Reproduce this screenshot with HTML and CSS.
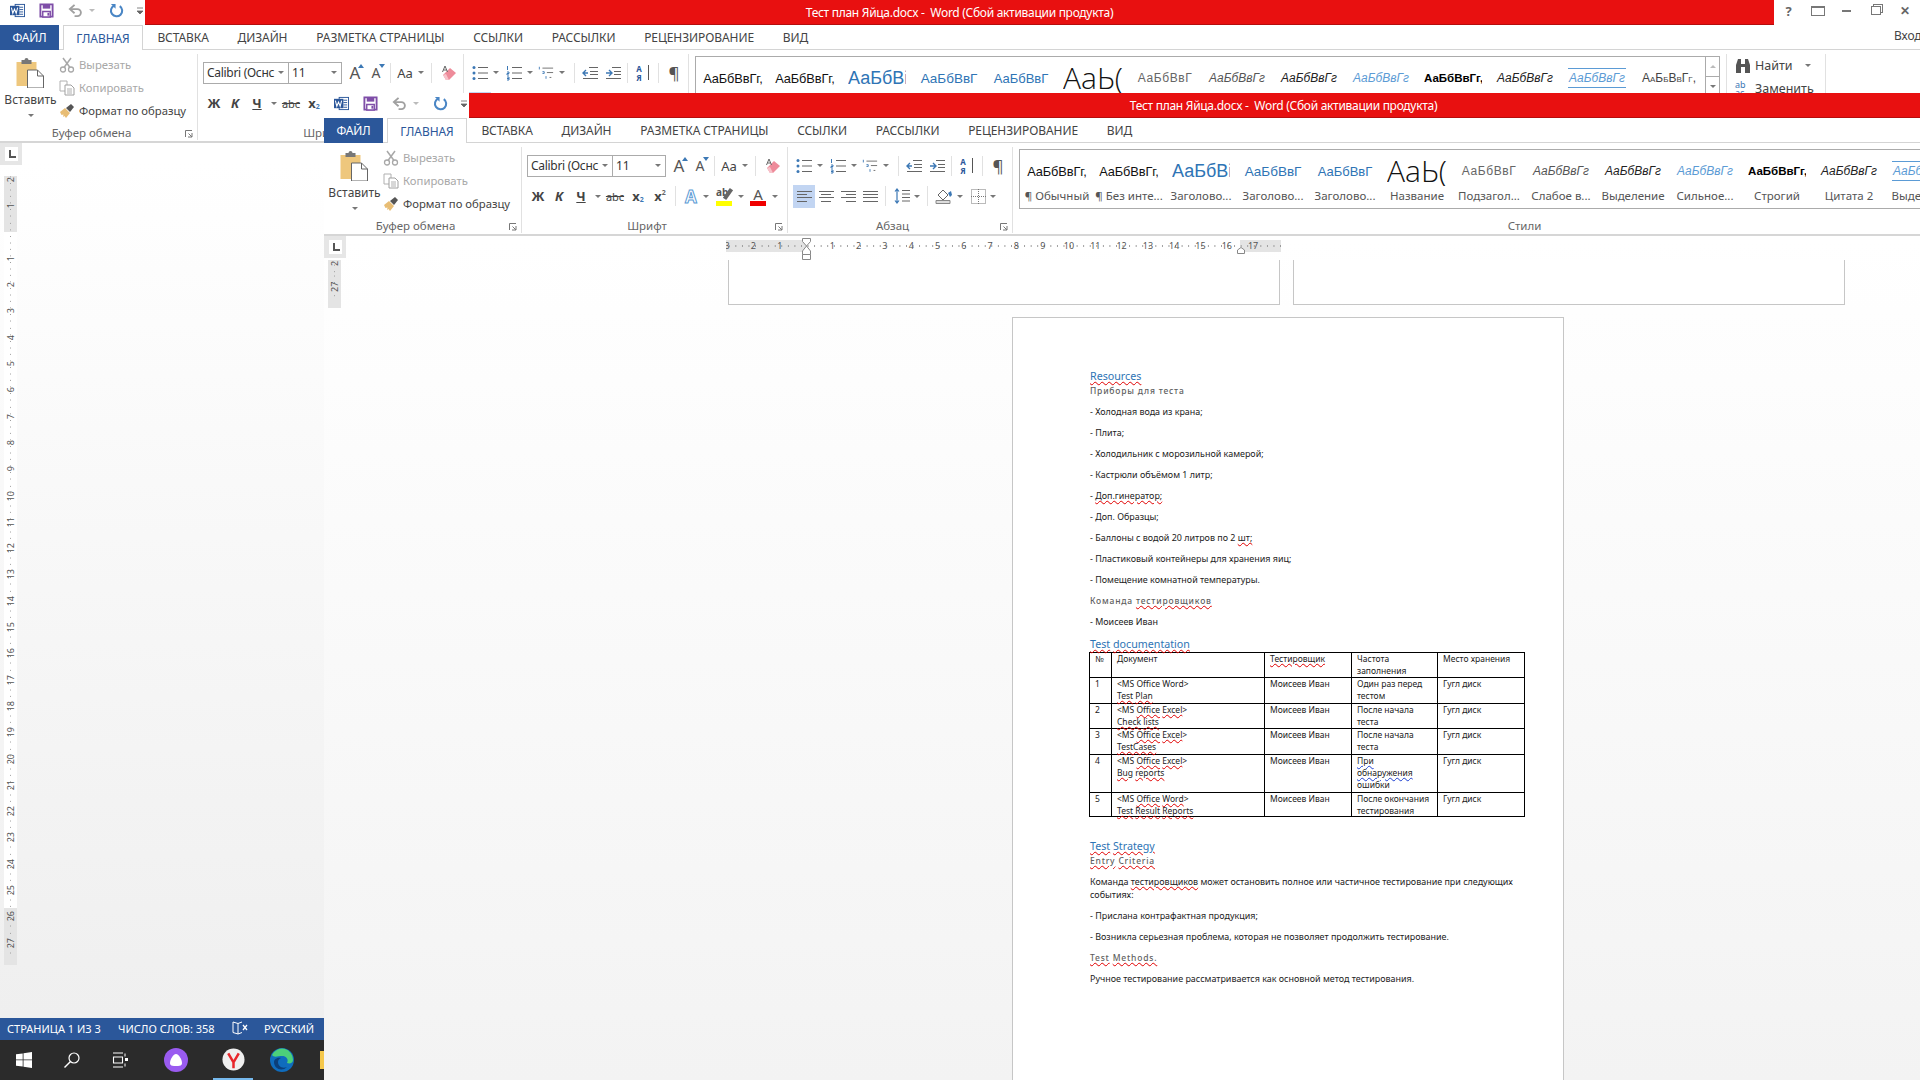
FILE: index.html
```html
<!DOCTYPE html>
<html lang="ru">
<head>
    <meta charset="UTF-8">
    <title>Тест план Яйца.docx - Word</title>
    <link rel="stylesheet" href="styles.css">
</head>
<body>
<svg class="sprites" aria-hidden="true">
    <symbol id="i-word" viewBox="0 0 16 16"><rect x="5.5" y="1.5" width="10" height="13" fill="#fff" stroke="#2b579a"/><path d="M10 4.500h4M10 7h4M10 9.500h4M10 12h4" stroke="#2b579a"/><rect x="0" y="3" width="10" height="10" fill="#2b579a"/><path d="M1.500 5l1.500 6 1.800-4.500 1.800 4.500 1.500-6" fill="none" stroke="#fff" stroke-width="1.100"/></symbol>
    <symbol id="i-save" viewBox="0 0 16 16"><path d="M1.500 1.500h13v13h-13z" fill="#fff" stroke="#7f4ea8" stroke-width="2"/><path d="M4 2h8v4H4z" fill="#7f4ea8"/><path d="M4 9h8v6H4z" fill="#fff" stroke="#7f4ea8" stroke-width="1.500"/><path d="M9 10.500h2v3H9z" fill="#7f4ea8"/></symbol>
    <symbol id="i-undo" viewBox="0 0 16 16"><path d="M3 6.500h7a3.700 3.700 0 0 1 0 7.500H7" fill="none" stroke="#a0a0a0" stroke-width="2"/><path d="M7 2L2 6.500 7 11" fill="none" stroke="#a0a0a0" stroke-width="2"/></symbol>
    <symbol id="i-redo" viewBox="0 0 16 16"><path d="M5.500 2.800a6 6 0 1 0 6 .5" fill="none" stroke="#4a86c5" stroke-width="2.200"/><path d="M2 1h5v5" fill="#4a86c5"/></symbol>
    <symbol id="i-more" viewBox="0 0 8 8"><path d="M1 1h6M1 4h6L4 7z" fill="#666" stroke="#666" stroke-width=".8"/></symbol>
    <symbol id="i-paste" viewBox="0 0 28 30"><path d="M0 4h20v24H0z" fill="#eec77d"/><path d="M5 2h3a2 2 0 0 1 4 0h3v4H5z" fill="#777"/><path d="M11 12h10l6 6v12H11z" fill="#fff" stroke="#666"/><path d="M21 12v6h6" fill="none" stroke="#666"/></symbol>
    <symbol id="i-cut" viewBox="0 0 16 16"><circle cx="4" cy="12.500" r="2.500" fill="none" stroke="#a8a8a8" stroke-width="1.300"/><circle cx="12" cy="12.500" r="2.500" fill="none" stroke="#a8a8a8" stroke-width="1.300"/><path d="M5 10.500L12 1M11 10.500L4 1" stroke="#a8a8a8" stroke-width="1.500"/></symbol>
    <symbol id="i-copy" viewBox="0 0 16 16"><path d="M1 1h7v10H1z" fill="#fff" stroke="#b0b0b0"/><path d="M6 5h6l3 3v7H6z" fill="#fff" stroke="#a0a0a0"/><path d="M8 9h5M8 11h5M8 13h5" stroke="#b0b0b0"/></symbol>
    <symbol id="i-brush" viewBox="0 0 16 16"><path d="M1 9l5-4 5 5-4 5-1.500-2L4 14l.5-2.500L2.500 12z" fill="#e8bd74"/><path d="M7 5l5-4 3 3-4 5z" fill="#555"/></symbol>
    <symbol id="i-eraser" viewBox="0 0 16 16"><path d="M2 10l7-7 6 5-7 7H5z" fill="#ee8b9a"/><path d="M2 10l3 5h3l-3-6z" fill="#f7c3cb"/><path d="M1.500 7L4 1l2.500 6M2.500 5h3" fill="none" stroke="#666"/></symbol>
    <symbol id="i-bullets" viewBox="0 0 16 16"><circle cx="2" cy="2.500" r="1.500" fill="#3c78b5"/><circle cx="2" cy="8" r="1.500" fill="#3c78b5"/><circle cx="2" cy="13.500" r="1.500" fill="#3c78b5"/><path d="M6 2.500h10M6 8h10M6 13.500h10" stroke="#666"/></symbol>
    <symbol id="i-numbers" viewBox="0 0 16 16"><path d="M1.500 1v4M1 7h2v1.500H1V10h2M1 12h2v3H1M1 13.500h2" fill="none" stroke="#3c78b5"/><path d="M6 2.500h10M6 8h10M6 13.500h10" stroke="#666"/></symbol>
    <symbol id="i-multi" viewBox="0 0 18 16"><path d="M1.500 1v3M5 6.500h2v2H5M9 11.500v3" fill="none" stroke="#3c78b5"/><path d="M5 2.500h12M10 7.500h7M13 13h2" stroke="#666"/></symbol>
    <symbol id="i-outdent" viewBox="0 0 16 16"><path d="M7 2.500h9M8 6.500h8M8 9.500h8M1 13.500h15" stroke="#666"/><path d="M6 8H1M4 5L1 8l3 3" fill="none" stroke="#3c78b5" stroke-width="1.400"/></symbol>
    <symbol id="i-indent" viewBox="0 0 16 16"><path d="M7 2.500h9M9 6.500h7M9 9.500h7M1 13.500h15" stroke="#666"/><path d="M1 8h6M4 5l3 3-3 3" fill="none" stroke="#3c78b5" stroke-width="1.400"/></symbol>
    <symbol id="i-spacing" viewBox="0 0 16 16"><path d="M3 1v14M1 3.500L3 1l2 2.500M1 12.500L3 15l2-2.500" fill="none" stroke="#3c78b5" stroke-width="1.200"/><path d="M8 2.500h8M8 6h8M8 9.500h8M8 13h8" stroke="#666"/></symbol>
    <symbol id="i-shade" viewBox="0 0 18 16"><path d="M3 7l5-5 5 5-5 5z" fill="#fff" stroke="#666"/><path d="M13 5l3-2 1 4-2 2z" fill="#3c78b5"/><path d="M1 12.500h14v3H1z" fill="#ddd" stroke="#888"/></symbol>
    <symbol id="i-borders" viewBox="0 0 15 15"><path d="M.500.500h14v14H.500z" fill="none" stroke="#777" stroke-dasharray="1 1"/><path d="M7.500 0v15M0 7.500h15" stroke="#777" stroke-dasharray="1 1"/></symbol>
    <symbol id="i-launch" viewBox="0 0 8 8"><path d="M.500 7V.500H7M7 3v4H3M3.500 3.500L7 7" fill="none" stroke="#777"/></symbol>
    <symbol id="i-find" viewBox="0 0 16 16"><path d="M1 7l2-6h3v5h4V1h3l2 6v8h-5V9H6v6H1z" fill="#555"/></symbol>
    <symbol id="i-book" viewBox="0 0 16 14"><path d="M1 1l5 1.500V13L1 11.500zM6 2.500l4-1.500M6 13l4-1.500" fill="none" stroke="#fff"/><path d="M11 4l4 5M15 4l-4 5" stroke="#fff" stroke-width="1.300"/></symbol>
    <symbol id="i-win" viewBox="0 0 16 16"><path d="M0 2.300L6.700 1.400V7.500H0zM7.500 1.300L16 0V7.500H7.500zM0 8.300H6.700V14.600L0 13.700zM7.500 8.300H16V16L7.500 14.800z" fill="#fff"/></symbol>
    <symbol id="i-search" viewBox="0 0 16 16"><circle cx="10" cy="6" r="5" fill="none" stroke="#fff" stroke-width="1.200"/><path d="M6.500 9.500L.5 15.500" stroke="#fff" stroke-width="1.400"/></symbol>
    <symbol id="i-tasks" viewBox="0 0 16 16"><path d="M1.500 5h9v6h-9zM1 1h10M1 15h10" fill="none" stroke="#fff" stroke-width="1.100"/><path d="M13 1.500v3M13 11.500v3" fill="none" stroke="#fff"/><path d="M13 6h3v3h-3z" fill="#fff"/></symbol>
    <symbol id="i-alice" viewBox="0 0 24 24"><circle cx="12" cy="12" r="12" fill="#9a5bf0"/><path d="M12 6c3 0 6 6 6 9 0 3-3 3-6 3s-6 0-6-3c0-3 3-9 6-9z" fill="#fff"/></symbol>
    <symbol id="i-yandex" viewBox="0 0 24 24"><circle cx="12" cy="12" r="11.500" fill="#efefef"/><path d="M6.500 5.500l5.500 9.500 5.500-9.500M12 14.500V21" fill="none" stroke="#e8262b" stroke-width="2.600"/></symbol>
    <symbol id="i-edge" viewBox="0 0 24 24"><circle cx="12" cy="12" r="12" fill="#0f6cbd"/><path d="M2 7a11 11 0 0 1 21 5c0 3-3 4-6 3 2-4-1-7-5-7-4 0-8 2-10-1z" fill="#4ccf7a"/><path d="M8 14c0 4 4 7 9 5-5 5-13 2-13-5 0-3 4-5 7-4-2 1-3 2-3 4z" fill="#0b3f7a"/></symbol>
</svg>

<div class="desktop">
    <!-- окно сзади -->
    <section class="window window-back">
        <header class="titlebar">
            <div class="qat">
                <svg class="qat-icon"><use href="#i-word"/></svg>
                <svg class="qat-icon"><use href="#i-save"/></svg>
                <svg class="qat-icon"><use href="#i-undo"/></svg>
                <span class="caret caret-light"></span>
                <svg class="qat-icon"><use href="#i-redo"/></svg>
                <svg class="qat-more"><use href="#i-more"/></svg>
            </div>
            <div class="title-red">Тест план Яйца.docx -&nbsp; Word (Сбой активации продукта)</div>
            <div class="winctl">
                <span class="ctl ctl-help">?</span>
                <span class="ctl"><span class="ctl-display"></span></span>
                <span class="ctl"><span class="ctl-min"></span></span>
                <span class="ctl"><span class="ctl-restore"></span></span>
                <span class="ctl ctl-close">✕</span>
            </div>
        </header>
        <nav class="tabs">
            <span class="tab-file">ФАЙЛ</span>
            <span class="tab tab-active">ГЛАВНАЯ</span>
            <span class="tab">ВСТАВКА</span>
            <span class="tab">ДИЗАЙН</span>
            <span class="tab">РАЗМЕТКА СТРАНИЦЫ</span>
            <span class="tab">ССЫЛКИ</span>
            <span class="tab">РАССЫЛКИ</span>
            <span class="tab">РЕЦЕНЗИРОВАНИЕ</span>
            <span class="tab">ВИД</span>
            <span class="signin">Вход</span>
        </nav>
        <div class="ribbon">
            <div class="group group-clip">
                <div class="group-body clip-body">
                    <div class="paste">
                        <svg class="paste-icon"><use href="#i-paste"/></svg>
                        <span>Вставить</span>
                        <span class="caret"></span>
                    </div>
                    <div class="clip-list">
                        <div class="clip-item off"><svg class="ico16"><use href="#i-cut"/></svg>Вырезать</div>
                        <div class="clip-item off"><svg class="ico16"><use href="#i-copy"/></svg>Копировать</div>
                        <div class="clip-item"><svg class="ico16"><use href="#i-brush"/></svg>Формат по образцу</div>
                    </div>
                </div>
                <div class="group-name">Буфер обмена<svg class="launch"><use href="#i-launch"/></svg></div>
            </div>
            <div class="group group-font">
                <div class="group-body rows">
                    <div class="row row-top">
                        <span class="combo combo-font">Calibri (Оснс<span class="caret"></span></span>
                        <span class="combo combo-size">11<span class="caret"></span></span>
                        <span class="tb w20 m3l glyph-a">A<i class="tri"></i></span>
                        <span class="tb w22 glyph-a small">A<i class="tri tri-down"></i></span>
                        <span class="sep m3"></span>
                        <span class="tb w22 glyph-aa">Aa</span><span class="tb w10"><span class="caret"></span></span>
                        <span class="sep m5"></span>
                        <span class="tb w24"><svg class="ico16"><use href="#i-eraser"/></svg></span>
                    </div>
                    <div class="row">
                        <span class="tb w22 fmt">Ж</span>
                        <span class="tb w20 fmt fmt-i">К</span>
                        <span class="tb w24 fmt fmt-u">Ч</span><span class="tb w10"><span class="caret"></span></span>
                        <span class="tb w24 fmt-s">abc</span>
                        <span class="tb w22 fmt">x<sub>2</sub></span>
                        <span class="tb w22 fmt">x<sup>2</sup></span>
                        <span class="sep m4"></span>
                        <span class="tb w22 fx-a">A</span><span class="tb w8"><span class="caret"></span></span>
                        <span class="tb w28"><span class="mark mark-y">ab</span></span><span class="tb w6"><span class="caret"></span></span>
                        <span class="tb w28"><span class="mark mark-r">A</span></span><span class="tb w6"><span class="caret"></span></span>
                    </div>
                </div>
                <div class="group-name">Шрифт<svg class="launch"><use href="#i-launch"/></svg></div>
            </div>
            <div class="group group-para">
                <div class="group-body rows">
                    <div class="row row-top">
                        <span class="tb w22"><svg class="ico16"><use href="#i-bullets"/></svg></span><span class="tb w10"><span class="caret"></span></span>
                        <span class="tb w26"><svg class="ico16"><use href="#i-numbers"/></svg></span><span class="tb w6"><span class="caret"></span></span>
                        <span class="tb w26"><svg class="ico16"><use href="#i-multi"/></svg></span><span class="tb w6"><span class="caret"></span></span>
                        <span class="sep m9"></span>
                        <span class="tb w24"><svg class="ico16"><use href="#i-outdent"/></svg></span>
                        <span class="tb w22"><svg class="ico16"><use href="#i-indent"/></svg></span>
                        <span class="sep m3"></span>
                        <span class="tb w24 sort">А<br>Я</span>
                        <span class="sep m3"></span>
                        <span class="tb w24 pilcrow">¶</span>
                    </div>
                    <div class="row">
                        <span class="tb w22 tb-on"><span class="align align-l"></span></span>
                        <span class="tb w22"><span class="align align-c"></span></span>
                        <span class="tb w22"><span class="align align-r"></span></span>
                        <span class="tb w22"><span class="align align-j"></span></span>
                        <span class="sep m4"></span>
                        <span class="tb w24"><svg class="ico16"><use href="#i-spacing"/></svg></span><span class="tb w6"><span class="caret"></span></span>
                        <span class="sep m7"></span>
                        <span class="tb w24"><svg class="ico18"><use href="#i-shade"/></svg></span><span class="tb w8"><span class="caret"></span></span>
                        <span class="tb w20 m4l"><svg class="ico15"><use href="#i-borders"/></svg></span><span class="tb w10"><span class="caret"></span></span>
                    </div>
                </div>
                <div class="group-name">Абзац<svg class="launch"><use href="#i-launch"/></svg></div>
            </div>
            <div class="group group-styles">
                <div class="group-body styles-body">
                    <div class="gallery">
                        <div class="style"><span class="pv pv-normal">АаБбВвГг,</span><span class="lb">¶ Обычный</span></div>
                        <div class="style"><span class="pv pv-normal">АаБбВвГг,</span><span class="lb">¶ Без инте...</span></div>
                        <div class="style"><span class="pv pv-h1">АаБбВі</span><span class="lb">Заголово...</span></div>
                        <div class="style"><span class="pv pv-h2">АаБбВвГ</span><span class="lb">Заголово...</span></div>
                        <div class="style"><span class="pv pv-h3">АаБбВвГ</span><span class="lb">Заголово...</span></div>
                        <div class="style"><span class="pv pv-title">АаЬ(</span><span class="lb">Название</span></div>
                        <div class="style"><span class="pv pv-sub">АаБбВвГ</span><span class="lb">Подзагол...</span></div>
                        <div class="style"><span class="pv pv-weak">АаБбВвГг</span><span class="lb">Слабое в...</span></div>
                        <div class="style"><span class="pv pv-em">АаБбВвГг</span><span class="lb">Выделение</span></div>
                        <div class="style"><span class="pv pv-strong-em">АаБбВвГг</span><span class="lb">Сильное...</span></div>
                        <div class="style"><span class="pv pv-bold">АаБбВвГг,</span><span class="lb">Строгий</span></div>
                        <div class="style"><span class="pv pv-em">АаБбВвГг</span><span class="lb">Цитата 2</span></div>
                        <div class="style"><span class="pv pv-quote">АаБбВвГг</span><span class="lb">Выделен...</span></div>
                        <div class="style"><span class="pv pv-caps">АаБбВвГг,</span><span class="lb">Слабая с...</span></div>
                    </div>
                    <div class="gallery-scroll">
                        <span class="gs-btn"><i class="tri-up"></i></span>
                        <span class="gs-btn"><span class="caret"></span></span>
                    </div>
                </div>
                <div class="group-name">Стили</div>
            </div>
            <div class="group group-edit">
                <div class="edit-item"><svg class="ico16"><use href="#i-find"/></svg>Найти<span class="caret"></span></div>
                <div class="edit-item"><span class="replace">ab<br>ac</span>Заменить</div>
            </div>
        </div>
        <div class="ruler-row">
            <span class="corner"><span class="corner-mark"></span></span>
        </div>
        <div class="vruler vruler-back">
            <span class="cm">2</span><span class="cm">1</span><span class="cm"></span>
            <span class="cm">1</span><span class="cm">2</span><span class="cm">3</span><span class="cm">4</span><span class="cm">5</span><span class="cm">6</span><span class="cm">7</span><span class="cm">8</span><span class="cm">9</span><span class="cm">10</span><span class="cm">11</span><span class="cm">12</span><span class="cm">13</span><span class="cm">14</span><span class="cm">15</span><span class="cm">16</span><span class="cm">17</span><span class="cm">18</span><span class="cm">19</span><span class="cm">20</span><span class="cm">21</span><span class="cm">22</span><span class="cm">23</span><span class="cm">24</span><span class="cm">25</span>
            <span class="cm">26</span><span class="cm">27</span>
        </div>
        <footer class="statusbar">
            <span class="st-page">СТРАНИЦА 1 ИЗ 3</span>
            <span class="st-words">ЧИСЛО СЛОВ: 358</span>
            <svg class="st-book"><use href="#i-book"/></svg>
            <span class="st-lang">РУССКИЙ</span>
        </footer>
        <div class="taskbar">
            <svg class="task-win"><use href="#i-win"/></svg>
            <svg class="task-search"><use href="#i-search"/></svg>
            <svg class="task-view"><use href="#i-tasks"/></svg>
            <svg class="task-alice"><use href="#i-alice"/></svg>
            <span class="task-open"><svg class="task-app"><use href="#i-yandex"/></svg></span>
            <svg class="task-edge"><use href="#i-edge"/></svg>
            <span class="task-folder"></span>
        </div>
    </section>

    <!-- окно спереди -->
    <section class="window window-front">
        <header class="titlebar">
            <div class="qat">
                <svg class="qat-icon"><use href="#i-word"/></svg>
                <svg class="qat-icon"><use href="#i-save"/></svg>
                <svg class="qat-icon"><use href="#i-undo"/></svg>
                <span class="caret caret-light"></span>
                <svg class="qat-icon"><use href="#i-redo"/></svg>
                <svg class="qat-more"><use href="#i-more"/></svg>
            </div>
            <div class="title-red">Тест план Яйца.docx -&nbsp; Word (Сбой активации продукта)</div>
        </header>
        <nav class="tabs">
            <span class="tab-file">ФАЙЛ</span>
            <span class="tab tab-active">ГЛАВНАЯ</span>
            <span class="tab">ВСТАВКА</span>
            <span class="tab">ДИЗАЙН</span>
            <span class="tab">РАЗМЕТКА СТРАНИЦЫ</span>
            <span class="tab">ССЫЛКИ</span>
            <span class="tab">РАССЫЛКИ</span>
            <span class="tab">РЕЦЕНЗИРОВАНИЕ</span>
            <span class="tab">ВИД</span>
        </nav>
        <div class="ribbon">
            <div class="group group-clip">
                <div class="group-body clip-body">
                    <div class="paste">
                        <svg class="paste-icon"><use href="#i-paste"/></svg>
                        <span>Вставить</span>
                        <span class="caret"></span>
                    </div>
                    <div class="clip-list">
                        <div class="clip-item off"><svg class="ico16"><use href="#i-cut"/></svg>Вырезать</div>
                        <div class="clip-item off"><svg class="ico16"><use href="#i-copy"/></svg>Копировать</div>
                        <div class="clip-item"><svg class="ico16"><use href="#i-brush"/></svg>Формат по образцу</div>
                    </div>
                </div>
                <div class="group-name">Буфер обмена<svg class="launch"><use href="#i-launch"/></svg></div>
            </div>
            <div class="group group-font">
                <div class="group-body rows">
                    <div class="row row-top">
                        <span class="combo combo-font">Calibri (Оснс<span class="caret"></span></span>
                        <span class="combo combo-size">11<span class="caret"></span></span>
                        <span class="tb w20 m3l glyph-a">A<i class="tri"></i></span>
                        <span class="tb w22 glyph-a small">A<i class="tri tri-down"></i></span>
                        <span class="sep m3"></span>
                        <span class="tb w22 glyph-aa">Aa</span><span class="tb w10"><span class="caret"></span></span>
                        <span class="sep m5"></span>
                        <span class="tb w24"><svg class="ico16"><use href="#i-eraser"/></svg></span>
                    </div>
                    <div class="row">
                        <span class="tb w22 fmt">Ж</span>
                        <span class="tb w20 fmt fmt-i">К</span>
                        <span class="tb w24 fmt fmt-u">Ч</span><span class="tb w10"><span class="caret"></span></span>
                        <span class="tb w24 fmt-s">abc</span>
                        <span class="tb w22 fmt">x<sub>2</sub></span>
                        <span class="tb w22 fmt">x<sup>2</sup></span>
                        <span class="sep m4"></span>
                        <span class="tb w22 fx-a">A</span><span class="tb w8"><span class="caret"></span></span>
                        <span class="tb w28"><span class="mark mark-y">ab</span></span><span class="tb w6"><span class="caret"></span></span>
                        <span class="tb w28"><span class="mark mark-r">A</span></span><span class="tb w6"><span class="caret"></span></span>
                    </div>
                </div>
                <div class="group-name">Шрифт<svg class="launch"><use href="#i-launch"/></svg></div>
            </div>
            <div class="group group-para">
                <div class="group-body rows">
                    <div class="row row-top">
                        <span class="tb w22"><svg class="ico16"><use href="#i-bullets"/></svg></span><span class="tb w10"><span class="caret"></span></span>
                        <span class="tb w26"><svg class="ico16"><use href="#i-numbers"/></svg></span><span class="tb w6"><span class="caret"></span></span>
                        <span class="tb w26"><svg class="ico16"><use href="#i-multi"/></svg></span><span class="tb w6"><span class="caret"></span></span>
                        <span class="sep m9"></span>
                        <span class="tb w24"><svg class="ico16"><use href="#i-outdent"/></svg></span>
                        <span class="tb w22"><svg class="ico16"><use href="#i-indent"/></svg></span>
                        <span class="sep m3"></span>
                        <span class="tb w24 sort">А<br>Я</span>
                        <span class="sep m3"></span>
                        <span class="tb w24 pilcrow">¶</span>
                    </div>
                    <div class="row">
                        <span class="tb w22 tb-on"><span class="align align-l"></span></span>
                        <span class="tb w22"><span class="align align-c"></span></span>
                        <span class="tb w22"><span class="align align-r"></span></span>
                        <span class="tb w22"><span class="align align-j"></span></span>
                        <span class="sep m4"></span>
                        <span class="tb w24"><svg class="ico16"><use href="#i-spacing"/></svg></span><span class="tb w6"><span class="caret"></span></span>
                        <span class="sep m7"></span>
                        <span class="tb w24"><svg class="ico18"><use href="#i-shade"/></svg></span><span class="tb w8"><span class="caret"></span></span>
                        <span class="tb w20 m4l"><svg class="ico15"><use href="#i-borders"/></svg></span><span class="tb w10"><span class="caret"></span></span>
                    </div>
                </div>
                <div class="group-name">Абзац<svg class="launch"><use href="#i-launch"/></svg></div>
            </div>
            <div class="group group-styles">
                <div class="group-body styles-body">
                    <div class="gallery">
                        <div class="style"><span class="pv pv-normal">АаБбВвГг,</span><span class="lb">¶ Обычный</span></div>
                        <div class="style"><span class="pv pv-normal">АаБбВвГг,</span><span class="lb">¶ Без инте...</span></div>
                        <div class="style"><span class="pv pv-h1">АаБбВі</span><span class="lb">Заголово...</span></div>
                        <div class="style"><span class="pv pv-h2">АаБбВвГ</span><span class="lb">Заголово...</span></div>
                        <div class="style"><span class="pv pv-h3">АаБбВвГ</span><span class="lb">Заголово...</span></div>
                        <div class="style"><span class="pv pv-title">АаЬ(</span><span class="lb">Название</span></div>
                        <div class="style"><span class="pv pv-sub">АаБбВвГ</span><span class="lb">Подзагол...</span></div>
                        <div class="style"><span class="pv pv-weak">АаБбВвГг</span><span class="lb">Слабое в...</span></div>
                        <div class="style"><span class="pv pv-em">АаБбВвГг</span><span class="lb">Выделение</span></div>
                        <div class="style"><span class="pv pv-strong-em">АаБбВвГг</span><span class="lb">Сильное...</span></div>
                        <div class="style"><span class="pv pv-bold">АаБбВвГг,</span><span class="lb">Строгий</span></div>
                        <div class="style"><span class="pv pv-em">АаБбВвГг</span><span class="lb">Цитата 2</span></div>
                        <div class="style"><span class="pv pv-quote">АаБбВвГг</span><span class="lb">Выделен...</span></div>
                    </div>
                </div>
                <div class="group-name">Стили</div>
            </div>
        </div>
        <div class="ruler-row">
            <span class="corner"><span class="corner-mark"></span></span>
            <div class="hruler">
                <div class="hruler-track">
                    <span>3</span><span>2</span><span>1</span><span></span><span>1</span><span>2</span><span>3</span><span>4</span><span>5</span><span>6</span><span>7</span><span>8</span><span>9</span><span>10</span><span>11</span><span>12</span><span>13</span><span>14</span><span>15</span><span>16</span><span>17</span><span></span>
                </div>
                <svg class="glass" viewBox="0 0 9 22"><path d="M.5.5h8v3L4.500 8l4 5v3.500h-8V13l4-5-4-4.500z" fill="#fff" stroke="#888"/><path d="M.5 16.500h8v5h-8z" fill="#fff" stroke="#888"/></svg>
                <svg class="right-mark" viewBox="0 0 8 7"><path d="M.5 6.500V3L4 .5 7.500 3v3.500z" fill="#fff" stroke="#888"/></svg>
            </div>
        </div>
        <div class="workspace">
            <div class="vruler vruler-front">
                <span class="cm cm-tight">2</span><span class="cm cm-tight">27</span>
            </div>
            <div class="pages">
                <div class="page-row">
                    <div class="page page-end"></div>
                    <div class="page page-end"></div>
                </div>
                <article class="page page-doc">
                    <h1 class="h1"><span class="sp">Resources</span></h1>
                    <h2 class="h2">Приборы для теста</h2>
                    <p>- Холодная вода из крана;</p>
                    <p>- Плита;</p>
                    <p>- Холодильник с морозильной камерой;</p>
                    <p>- Кастрюли объёмом 1 литр;</p>
                    <p>- <span class="sp">Доп.гинератор;</span></p>
                    <p>- Доп. Образцы;</p>
                    <p>- Баллоны с водой 20 литров по 2 <span class="sp">шт;</span></p>
                    <p>- Пластиковый контейнеры для хранения яиц;</p>
                    <p>- Помещение комнатной температуры.</p>
                    <h2 class="h2">Команда <span class="sp">тестировщиков</span></h2>
                    <p>- Моисеев Иван</p>
                    <h1 class="h1"><span class="sp">Test</span> <span class="sp">documentation</span></h1>
                    <table class="doc-table">
                        <colgroup><col class="c1"><col class="c2"><col class="c3"><col class="c4"><col class="c5"></colgroup>
                        <tr><td>№</td><td>Документ</td><td><span class="sp">Тестировщик</span></td><td>Частота заполнения</td><td>Место хранения</td></tr>
                        <tr class="tall"><td>1</td><td>&lt;MS Office Word&gt;<br><span class="sp">Test</span> <span class="sp">Plan</span></td><td>Моисеев Иван</td><td>Один раз перед тестом</td><td>Гугл диск</td></tr>
                        <tr><td>2</td><td>&lt;MS <span class="sp">Office</span> <span class="sp">Excel</span>&gt;<br><span class="sp">Check</span> <span class="sp">lists</span></td><td>Моисеев Иван</td><td>После начала теста</td><td>Гугл диск</td></tr>
                        <tr class="tall"><td>3</td><td>&lt;MS <span class="sp">Office</span> <span class="sp">Excel</span>&gt;<br><span class="sp">TestCases</span></td><td>Моисеев Иван</td><td>После начала теста</td><td>Гугл диск</td></tr>
                        <tr class="tall"><td>4</td><td>&lt;MS <span class="sp">Office</span> <span class="sp">Excel</span>&gt;<br><span class="sp">Bug</span> <span class="sp">reports</span></td><td>Моисеев Иван</td><td><span class="gr">При</span><br><span class="gr">обнаружения</span><br>ошибки</td><td>Гугл диск</td></tr>
                        <tr class="short"><td>5</td><td>&lt;MS <span class="sp">Office</span> <span class="sp">Word</span>&gt;<br><span class="sp">Test</span> <span class="sp">Result</span> <span class="sp">Reports</span></td><td>Моисеев Иван</td><td>После окончания тестирования</td><td>Гугл диск</td></tr>
                    </table>
                    <h1 class="h1 after-table"><span class="sp">Test</span> <span class="sp">Strategy</span></h1>
                    <h2 class="h2"><span class="sp">Entry</span> <span class="sp">Criteria</span></h2>
                    <p>Команда <span class="sp">тестировщиков</span> может остановить полное или частичное тестирование при следующих<br>событиях:</p>
                    <p>- Прислана контрафактная продукция;</p>
                    <p>- Возникла серьезная проблема, которая не позволяет продолжить тестирование.</p>
                    <h2 class="h2"><span class="sp">Test</span> <span class="sp">Methods.</span></h2>
                    <p>Ручное тестирование рассматривается как основной метод тестирования.</p>
                </article>
            </div>
        </div>
    </section>
</div>
</body>
</html>
```

FILE: styles.css
```css
* {
    box-sizing: border-box;
}

html, body {
    margin: 0;
    padding: 0;
}

body {
    font-family: "Noto Sans", "Open Sans", sans-serif;
    font-size: 12px;
    color: #444;
    background: #fff;
}

.sprites {
    position: absolute;
    width: 0;
    height: 0;
}

.desktop {
    position: relative;
    width: 1920px;
    height: 1080px;
    overflow: hidden;
}

/* windows */
.window {
    position: absolute;
    display: flex;
    flex-direction: column;
    width: 1920px;
    background: #fff;
}

.window-back {
    left: 0;
    top: 0;
    height: 1080px;
    background: linear-gradient(#fff 15%, #efefef 94%);
}

.window-front {
    left: 324px;
    top: 93px;
    height: 987px;
    background: linear-gradient(#fff 15%, #f3f3f3 100%);
}

/* title bar */
.titlebar {
    display: flex;
    height: 25px;
    background: #fff;
    flex: none;
}

.qat {
    display: flex;
    align-items: center;
    width: 145px;
    height: 21px;
    padding-left: 10px;
    flex: none;
}

.qat-icon {
    width: 15px;
    height: 15px;
    margin-right: 14px;
}

.qat-icon + .caret {
    margin: 0 14px 0 -8px;
}

.qat-more {
    width: 8px;
    height: 8px;
    margin-left: -2px;
}

.title-red {
    flex: none;
    width: 1629px;
    height: 25px;
    line-height: 25px;
    text-align: center;
    background: #e81010;
    border-bottom: 1px solid #b50d0d;
    color: #fff;
    font-size: 12px;
    letter-spacing: -.29px;
}

.winctl {
    display: flex;
}

.ctl {
    display: flex;
    align-items: center;
    justify-content: center;
    width: 29.200px;
    height: 21px;
    color: #666;
}

.ctl-help {
    font-weight: 700;
    font-size: 13px;
}

.ctl-close {
    font-size: 12px;
    font-weight: 700;
}

.ctl-display {
    width: 14px;
    height: 10px;
    border: 1px solid #777;
    border-top-width: 2px;
}

.ctl-min {
    width: 9px;
    height: 2px;
    background: #777;
}

.ctl-restore {
    width: 10px;
    height: 9px;
    border: 1px solid #777;
    box-shadow: 2px -2px 0 -1px #fff, 2px -2px 0 0 #777;
}

/* tabs */
.tabs {
    display: flex;
    height: 25px;
    flex: none;
    background: #fff;
    border-bottom: 1px solid #d4d4d4;
    font-size: 12px;
    letter-spacing: -.08px;
    color: #444;
    line-height: 25px;
}

.tab-file {
    width: 59px;
    height: 25px;
    margin-right: 4px;
    text-align: center;
    background: #2b579a;
    color: #fff;
}

.tab {
    padding: 0 14.400px;
    height: 25px;
    white-space: nowrap;
}

.tab-active {
    width: 80px;
    padding: 0;
    text-align: center;
    color: #2b579a;
    background: #fff;
    border: 1px solid #d4d4d4;
    border-bottom: 0;
}

.signin {
    margin-left: auto;
    width: 26px;
    overflow: hidden;
    white-space: nowrap;
    line-height: 21px;
}

/* ribbon */
.ribbon {
    display: flex;
    height: 93px;
    flex: none;
    background: #fff;
    border-bottom: 2px solid #d6d6d6;
    overflow: hidden;
}

.group {
    position: relative;
    display: flex;
    flex-direction: column;
    flex: none;
    height: 86px;
    margin-top: 4px;
    border-right: 1px solid #e1e1e1;
}

.group-body {
    height: 73px;
}

.group-name {
    position: relative;
    padding-right: 20px;
    text-align: center;
    font-size: 11.500px;
    line-height: 14px;
    color: #666;
    margin-top: 1px;
}

.launch {
    position: absolute;
    right: 4px;
    top: 4px;
    width: 8px;
    height: 8px;
}

.group-clip { width: 198px; }
.group-font { width: 266px; padding-left: 5px; }
.group-para { width: 225px; padding-left: 5px; }
.group-styles { width: 1038px; padding-left: 6px; }
.group-edit { width: 99px; padding: 0 0 0 8px; }

.group-clip .group-name {
    padding-right: 14px;
}

.clip-body {
    display: flex;
}

.paste {
    display: flex;
    flex-direction: column;
    align-items: center;
    width: 61px;
    padding-top: 4px;
    line-height: 16px;
    color: #444;
}

.paste-icon {
    width: 29px;
    height: 30px;
    margin-bottom: 4px;
}

.paste .caret {
    margin-top: 6px;
}

.clip-list {
    display: flex;
    flex-direction: column;
    margin-left: -2px;
    margin-top: -1px;
}

.clip-item {
    display: flex;
    align-items: center;
    gap: 4px;
    height: 23px;
    white-space: nowrap;
    font-size: 11.300px;
}

.clip-item.off {
    color: #a8a8a8;
}

.ico16 { width: 16px; height: 16px; flex: none; }
.ico18 { width: 18px; height: 16px; flex: none; }
.ico15 { width: 15px; height: 15px; flex: none; }

.caret {
    display: inline-block;
    width: 0;
    height: 0;
    border-left: 3px solid transparent;
    border-right: 3px solid transparent;
    border-top: 3px solid #777;
    flex: none;
}

.caret-light {
    border-top-color: #bbb;
}

.rows {
    padding-top: 7px;
}

.row {
    display: flex;
    align-items: center;
    height: 24px;
}

.row-top {
    height: 23px;
    margin-bottom: 7px;
}

.tb {
    display: flex;
    align-items: center;
    justify-content: center;
    position: relative;
    height: 23px;
    flex: none;
    color: #444;
}

.w6 { width: 6px; }
.w8 { width: 8px; }
.w10 { width: 10px; }
.w20 { width: 20px; }
.w22 { width: 22px; }
.w24 { width: 24px; }
.w26 { width: 26px; }
.w28 { width: 28px; }
.m3l { margin-left: 3px; }
.m4l { margin-left: 4px; }

.sep {
    width: 1px;
    height: 20px;
    background: #e1e1e1;
    flex: none;
}

.m3 { margin: 0 3px; }
.m4 { margin: 0 4px; }
.m5 { margin: 0 5px; }
.m7 { margin: 0 4px 0 7px; }
.m9 { margin: 0 3px 0 9px; }

.combo {
    position: relative;
    display: flex;
    align-items: center;
    justify-content: space-between;
    height: 22px;
    padding: 0 4px 0 3px;
    background: #fff;
    border: 1px solid #ababab;
    flex: none;
    white-space: nowrap;
    color: #333;
    font-size: 12px;
}

.combo-font { width: 86px; letter-spacing: -.3px; }
.combo-size { width: 54px; margin-left: -1px; }

.glyph-a {
    font-size: 17px;
    color: #555;
}

.glyph-a.small {
    font-size: 14px;
}

.tri {
    position: absolute;
    top: 3px;
    right: 1px;
    border-left: 3px solid transparent;
    border-right: 3px solid transparent;
    border-bottom: 4px solid #3c78b5;
}

.tri-down {
    border-bottom: 0;
    border-top: 4px solid #3c78b5;
    right: 2px;
}

.glyph-aa {
    font-size: 13px;
}

.fmt {
    font-size: 13px;
    font-weight: 700;
    color: #444;
}

.fmt-i { font-style: italic; }

.fmt-u {
    text-decoration: underline;
}

.fmt sub, .fmt sup {
    font-size: 7px;
    color: #3c78b5;
    line-height: 8px;
}

.fmt sub {
    align-self: flex-end;
    margin-bottom: 4px;
}

.fmt sup {
    align-self: flex-start;
    margin-top: 4px;
    color: #666;
}

.fmt-s {
    font-size: 11px;
    text-decoration: line-through;
}

.fx-a {
    font-size: 17px;
    font-weight: 700;
    color: #fff;
    -webkit-text-stroke: 1px #5b9bd5;
}

.mark {
    position: relative;
    display: block;
    width: 16px;
    height: 19px;
    text-align: center;
    line-height: 14px;
    font-size: 12px;
    color: #555;
    font-weight: 700;
}

.mark-y {
    border-bottom: 5px solid #ffff00;
    text-align: left;
    font-size: 10px;
    line-height: 10px;
}

.mark-y::after {
    content: "";
    position: absolute;
    right: 2px;
    top: 1px;
    width: 4px;
    height: 12px;
    background: #666;
    transform: rotate(35deg);
}

.mark-r { border-bottom: 5px solid #f00000; font-size: 15px; font-weight: 400; }

.sort {
    font-size: 8px;
    line-height: 9px;
    font-weight: 700;
    color: #2b579a;
    text-align: center;
    padding-right: 8px;
}

.sort::after {
    content: "";
    position: absolute;
    right: 6px;
    top: 4px;
    width: 1px;
    height: 15px;
    background: #555;
}

.pilcrow {
    font-size: 17px;
    color: #555;
}

.tb-on {
    background: #c2d5f2;
}

.align {
    display: block;
    width: 15px;
    height: 11px;
    background-repeat: no-repeat;
}

.align-l { background: linear-gradient(#666, #666) 0 0/15px 1px no-repeat, linear-gradient(#666, #666) 0 3.300px/10px 1px no-repeat, linear-gradient(#666, #666) 0 6.600px/15px 1px no-repeat, linear-gradient(#666, #666) 0 10px/10px 1px no-repeat; }
.align-c { background: linear-gradient(#666, #666) 0 0/15px 1px no-repeat, linear-gradient(#666, #666) 2.500px 3.300px/10px 1px no-repeat, linear-gradient(#666, #666) 0 6.600px/15px 1px no-repeat, linear-gradient(#666, #666) 2.500px 10px/10px 1px no-repeat; }
.align-r { background: linear-gradient(#666, #666) 0 0/15px 1px no-repeat, linear-gradient(#666, #666) 5px 3.300px/10px 1px no-repeat, linear-gradient(#666, #666) 0 6.600px/15px 1px no-repeat, linear-gradient(#666, #666) 5px 10px/10px 1px no-repeat; }
.align-j { background: linear-gradient(#666, #666) 0 0/15px 1px no-repeat, linear-gradient(#666, #666) 0 3.300px/15px 1px no-repeat, linear-gradient(#666, #666) 0 6.600px/15px 1px no-repeat, linear-gradient(#666, #666) 0 10px/15px 1px no-repeat; }

/* styles gallery */
.styles-body {
    display: flex;
    padding-top: 2px;
}

.gallery {
    display: flex;
    height: 60px;
    border: 1px solid #ababab;
    border-right: 0;
    padding-left: 1px;
}

.style {
    display: flex;
    flex-direction: column;
    width: 72px;
    text-align: center;
}

.pv {
    display: block;
    height: 36px;
    line-height: 43px;
    margin: 0 7px;
    overflow: hidden;
    white-space: nowrap;
    font-family: "Liberation Sans", sans-serif;
    font-size: 12px;
    color: #111;
}

.lb {
    font-size: 11.500px;
    line-height: 16px;
    white-space: nowrap;
    color: #555;
    margin-top: 2px;
}

.pv-normal { font-size: 12.800px; letter-spacing: -.1px; margin: 0 4px; }
.pv-h1 { font-size: 18px; color: #2e74b5; }
.pv-h2 { font-size: 13.500px; color: #2e74b5; }
.pv-h3 { font-size: 13px; color: #2e74b5; }
.pv-title { font-family: "Open Sans", sans-serif; font-size: 30px; margin: 0 6px; line-height: 42px; font-weight: 300; }
.pv-sub { font-size: 12px; letter-spacing: .6px; color: #666; margin: 0 4px; }
.pv-weak { font-style: italic; color: #555; }
.pv-em { font-style: italic; color: #222; }
.pv-strong-em { font-style: italic; color: #5b9bd5; }
.pv-bold { font-weight: 700; font-size: 11.500px; color: #000; }
.pv-quote { font-style: italic; color: #5b9bd5; height: 20px; line-height: 18px; margin-top: 11px; margin-bottom: 5px; border-top: 1px solid #5b9bd5; border-bottom: 1px solid #5b9bd5; }
.pv-caps { font-size: 12px; color: #444; font-variant: small-caps; }

.gallery-scroll {
    display: flex;
    flex-direction: column;
    width: 15px;
    height: 60px;
}

.gs-btn {
    display: flex;
    align-items: center;
    justify-content: center;
    height: 21px;
    border: 1px solid #ababab;
    margin-bottom: -1px;
}

.tri-up {
    border-left: 3px solid transparent;
    border-right: 3px solid transparent;
    border-bottom: 3px solid #bbb;
}

.edit-item {
    display: flex;
    align-items: center;
    gap: 4px;
    height: 23px;
    font-size: 12.500px;
    color: #444;
}

.edit-item .caret {
    margin-left: 8px;
}

.replace {
    font-size: 9px;
    line-height: 8px;
    width: 16px;
    color: #3c78b5;
}

/* rulers */
.ruler-row {
    display: flex;
    flex: none;
    height: 24px;
}

.window-back .ruler-row {
    height: 33px;
}

.corner {
    display: flex;
    align-items: center;
    justify-content: center;
    width: 22px;
    height: 22px;
    background: #e6e6e6;
    flex: none;
}

.corner-mark {
    position: relative;
    display: block;
    width: 13px;
    height: 14px;
    background: #fff;
}

.corner-mark::after {
    content: "";
    position: absolute;
    left: 4px;
    top: 3px;
    width: 5px;
    height: 6px;
    border-left: 2px solid #555;
    border-bottom: 2px solid #555;
}

.hruler {
    position: relative;
    width: 555px;
    height: 12px;
    margin: 4px 0 0 380px;
    background: linear-gradient(to right, #e4e4e4 80px, #fff 80px, #fff 514px, #e4e4e4 514px);
}

.hruler-track {
    display: flex;
    width: 100%;
    height: 12px;
    overflow: hidden;
    background-image: radial-gradient(circle, #999 .5px, transparent .8px);
    background-size: 6.575px 12px;
}

.hruler-track span {
    flex: none;
    width: 26.300px;
    text-align: center;
    font-size: 9px;
    line-height: 12px;
    color: #555;
    position: relative;
    left: -12px;
}

.glass {
    position: absolute;
    left: 76px;
    top: -2px;
    width: 9px;
    height: 22px;
}

.right-mark {
    position: absolute;
    left: 511px;
    top: 7px;
    width: 8px;
    height: 7px;
}

.vruler {
    display: flex;
    flex-direction: column;
    flex: none;
    width: 13px;
    background: #e4e4e4;
    overflow: hidden;
}

.vruler .cm:first-child {
    margin-top: -9px;
}

.vruler-back {
    height: 789px;
    margin-left: 4px;
    background: linear-gradient(#e4e4e4 56px, #fff 56px, #fff 732px, #e4e4e4 732px);
}

.cm {
    display: flex;
    align-items: center;
    justify-content: center;
    flex: none;
    height: 26.300px;
    writing-mode: vertical-rl;
    transform: rotate(180deg);
    font-size: 9px;
    color: #555;
    background-image: radial-gradient(circle, #999 .5px, transparent .8px);
    background-size: 13px 6.575px;
}

.cm-tight {
    height: 24px;
}

.statusbar {
    display: flex;
    align-items: center;
    flex: none;
    height: 22px;
    margin-top: auto;
    padding: 0 0 2px 7px;
    background: linear-gradient(to right, #2b579a 324px, transparent 324px);
    color: #fff;
    font-size: 11px;
    white-space: nowrap;
}

.st-page { width: 111px; }
.st-words { width: 114px; }
.st-book { width: 16px; height: 14px; }
.st-lang { margin-left: 16px; }

.taskbar {
    display: flex;
    align-items: center;
    flex: none;
    height: 40px;
    background: #2b2b2b;
}

.taskbar svg {
    flex: none;
}

.task-win { width: 16px; height: 16px; margin-left: 16px; }
.task-search { width: 16px; height: 16px; margin-left: 32px; }
.task-view { width: 16px; height: 16px; margin-left: 32px; }
.task-alice { width: 24px; height: 24px; margin-left: 36px; }

.task-open {
    display: flex;
    align-items: center;
    justify-content: center;
    width: 40px;
    height: 40px;
    margin-left: 25px;
    border-bottom: 2px solid #76b9ed;
    flex: none;
}

.task-app { width: 23px; height: 23px; }
.task-edge { width: 24px; height: 24px; margin-left: 17px; }

.task-folder {
    width: 20px;
    height: 18px;
    margin-left: 26px;
    background: #f5c84c;
    flex: none;
}

/* document */
.workspace {
    display: flex;
    flex: 1;
    min-height: 0;
}

.vruler-front {
    height: 48px;
    margin-left: 4px;
}

.pages {
    padding-left: 387px;
}

.page {
    background: #fff;
    border: 1px solid #c6c6c6;
}

.page-row {
    display: flex;
    gap: 13px;
    height: 45px;
}

.page-end {
    width: 552px;
    border-top: 0;
}

.page-doc {
    width: 552px;
    height: 780px;
    margin: 12px 0 0 284px;
    padding: 50px 0 0 77px;
    font-family: "Noto Sans", sans-serif;
    font-size: 8.950px;
    color: #222;
}

.page-doc p {
    margin: 0 0 8px;
    line-height: 13px;
    white-space: nowrap;
}

.h1 {
    margin: 0;
    font-size: 10.700px;
    font-weight: 400;
    line-height: 16px;
    color: #2e74b5;
    white-space: nowrap;
}

.h2 {
    margin: 0 0 7px;
    font-size: 8.500px;
    font-weight: 500;
    line-height: 14px;
    letter-spacing: .8px;
    color: #5f5f5f;
    white-space: nowrap;
}

.sp {
    text-decoration: underline wavy #e00000 1px;
    text-underline-offset: 1px;
}

.gr {
    text-decoration: underline wavy #1c3fd0 1px;
    text-underline-offset: 1px;
}

.doc-table {
    width: 435px;
    margin-left: -1px;
    table-layout: fixed;
    border-collapse: collapse;
    font-size: 8.500px;
    line-height: 12px;
    color: #222;
}

.doc-table td {
    padding: 0 5px;
    border: 1px solid #000;
    vertical-align: top;
}

.doc-table tr.tall td {
    padding-bottom: 1px;
}

.doc-table tr.short td {
    line-height: 11.500px;
}

.c1 { width: 22px; }
.c2 { width: 153px; }
.c3 { width: 87px; }
.c4 { width: 86px; }
.c5 { width: 87px; }

.after-table {
    margin-top: 21px;
}
```
